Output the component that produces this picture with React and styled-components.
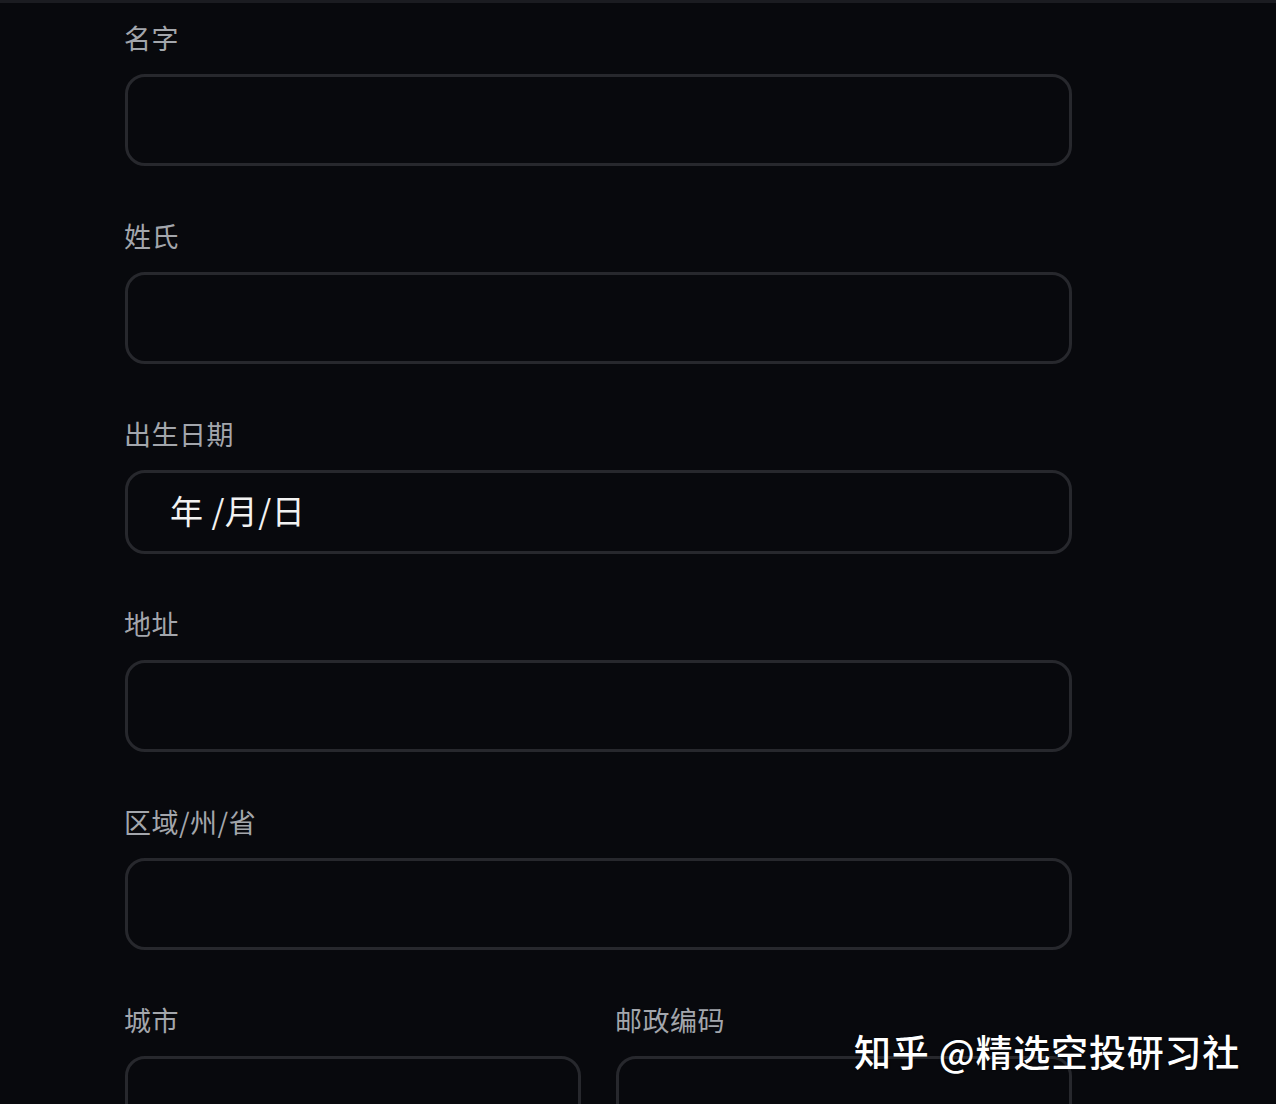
import React from "react";
import styled, { createGlobalStyle } from "styled-components";

const Global = createGlobalStyle`
  html, body { margin: 0; padding: 0; background: #08090d; }
  body { font-family: "Noto Sans CJK SC", "Noto Sans", sans-serif; overflow: hidden; }
`;

const Page = styled.div`
  position: relative;
  width: 1276px;
  height: 1104px;
  box-sizing: border-box;
  background: #08090d;
  border-top: 3px solid #1b1c21;
  overflow: hidden;
`;

const Form = styled.div`
  width: 948px;
  margin-left: 124px;
  padding-top: 17px;
  display: flex;
  flex-direction: column;
  gap: 52px;
`;

const Field = styled.div`
  display: flex;
  flex-direction: column;
  gap: 18px;
  min-width: 0;
`;

const Row = styled.div`
  display: grid;
  grid-template-columns: 457px 457px;
  column-gap: 34px;
`;

const Label = styled.div`
  font-size: 27px;
  line-height: 36px;
  height: 36px;
  color: #a3a6ac;
  letter-spacing: 0.5px;
`;

const Input = styled.div`
  box-sizing: border-box;
  height: ${(p) => p.$h || 92}px;
  border: 3px solid #27282d;
  border-radius: 20px;
  background: #08090d;
  margin-left: 1px;
  display: flex;
  align-items: center;
  padding-left: 42px;
  padding-bottom: 4px;
  color: #f2f2f2;
  font-size: 33px;
  letter-spacing: 0.5px;
`;

const Watermark = styled.div`
  position: absolute;
  left: 854px;
  top: 1026px;
  font-size: 37px;
  line-height: 44px;
  font-weight: 500;
  letter-spacing: 0.8px;
  color: #ffffff;
  white-space: nowrap;
  text-shadow: 0 0 2px rgba(0,0,0,0.6);
`;

export default function App() {
  return (
    <>
      <Global />
      <Page>
        <Form>
          <Field>
            <Label>名字</Label>
            <Input />
          </Field>
          <Field>
            <Label>姓氏</Label>
            <Input />
          </Field>
          <Field>
            <Label>出生日期</Label>
            <Input $h={84}>年 /月/日</Input>
          </Field>
          <Field>
            <Label>地址</Label>
            <Input />
          </Field>
          <Field>
            <Label>区域/州/省</Label>
            <Input />
          </Field>
          <Row>
            <Field>
              <Label>城市</Label>
              <Input />
            </Field>
            <Field>
              <Label>邮政编码</Label>
              <Input />
            </Field>
          </Row>
        </Form>
        <Watermark>知乎 @精选空投研习社</Watermark>
      </Page>
    </>
  );
}
